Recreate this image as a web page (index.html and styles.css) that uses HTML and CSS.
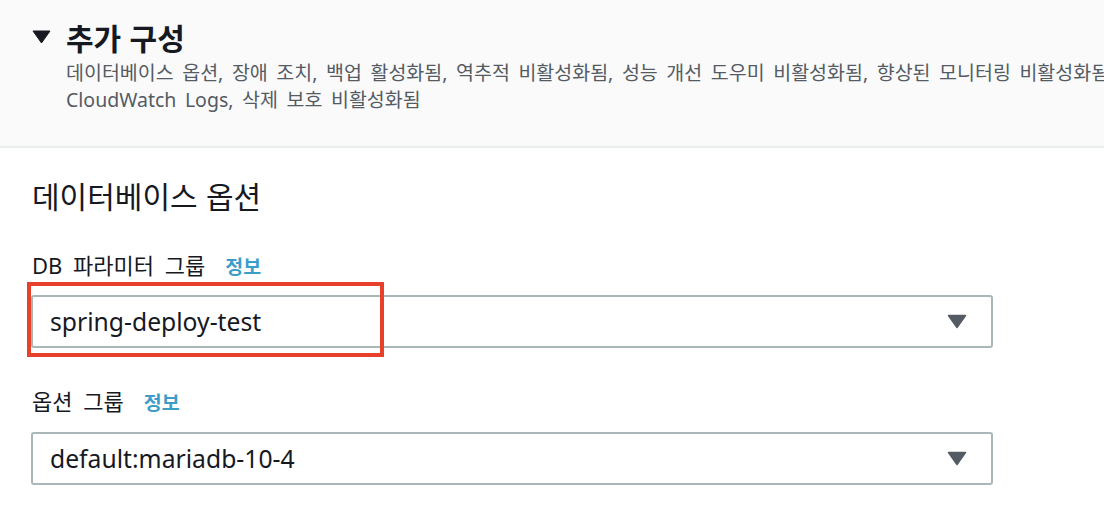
FILE: index.html
```html
<!DOCTYPE html>
<html lang="ko">
<head>
<meta charset="utf-8">
<link rel="stylesheet" href="styles.css">
</head>
<body>
<section class="expander">
  <div class="exp-head">
    <svg class="caret" width="19" height="14" viewBox="0 0 19 14"><path d="M1 1 H18 L9.5 13 Z" fill="#16191f" stroke="#16191f" stroke-width="1" stroke-linejoin="round"/></svg>
    <h2 class="exp-title">추가 구성</h2>
  </div>
  <p class="exp-desc">
    <span class="line">데이터베이스 옵션, 장애 조치, 백업 활성화됨, 역추적 비활성화됨, 성능 개선 도우미 비활성화됨, 향상된 모니터링 비활성화됨,</span>
    <span class="line">CloudWatch Logs, 삭제 보호 비활성화됨</span>
  </p>
</section>
<section class="content">
  <h3 class="section-title">데이터베이스 옵션</h3>
  <div class="field">
    <div class="label">DB 파라미터 그룹<a class="info">정보</a></div>
    <div class="select-wrap">
      <div class="select"><span class="value">spring-deploy-test</span>
        <svg class="arrow" width="20" height="15" viewBox="0 0 20 15"><path d="M1.5 1.5 H18.5 L10 13.5 Z" fill="#545b64" stroke="#545b64" stroke-width="1.5" stroke-linejoin="round"/></svg>
      </div>
      <div class="highlight"></div>
    </div>
  </div>
  <div class="field second">
    <div class="label">옵션 그룹<a class="info">정보</a></div>
    <div class="select-wrap">
      <div class="select"><span class="value">default:mariadb-10-4</span>
        <svg class="arrow" width="20" height="15" viewBox="0 0 20 15"><path d="M1.5 1.5 H18.5 L10 13.5 Z" fill="#545b64" stroke="#545b64" stroke-width="1.5" stroke-linejoin="round"/></svg>
      </div>
    </div>
  </div>
</section>
</body>
</html>
```
FILE: styles.css
```css
html, body {
  margin: 0;
  padding: 0;
  background: #ffffff;
  overflow: hidden;
}
body {
  width: 1104px;
  height: 522px;
  font-family: "Noto Sans", "Noto Sans CJK KR", sans-serif;
  color: #16191f;
}
.expander {
  background: #fafafa;
  border-bottom: 2px solid #eaeded;
  height: 148px;
  box-sizing: border-box;
  padding: 19px 0 0 32px;
}
.exp-head {
  display: flex;
  align-items: center;
  gap: 15px;
  height: 36px;
}
.caret {
  display: block;
  flex: none;
}
.exp-title {
  margin: 0;
  font-size: 30px;
  font-weight: 700;
  line-height: 36px;
  font-family: "Noto Sans CJK KR", sans-serif;
}
.exp-desc {
  margin: 4px 0 0 34px;
  font-size: 19.5px;
  word-spacing: 3.5px;
  line-height: 27px;
  color: #545b64;
}
.exp-desc .line {
  display: block;
  white-space: nowrap;
}
.content {
  padding: 29px 0 0 31px;
}
.section-title {
  margin: 0 0 0 1px;
  font-size: 30px;
  font-weight: 400;
  line-height: 36px;
  font-family: "Noto Sans CJK KR", sans-serif;
}
.field {
  margin-top: 38px;
}
.field.second {
  margin-top: 39px;
}
.label {
  display: flex;
  align-items: baseline;
  font-size: 22px;
  word-spacing: 5px;
  line-height: 28px;
  margin-left: 1px;
  margin-bottom: 14px;
}
.second .label {
  margin-bottom: 15px;
}
.info {
  margin-left: 20px;
  font-size: 19.5px;
  font-weight: 700;
  color: #3d9dc9;
}
.select-wrap {
  position: relative;
  width: 962px;
}
.select {
  height: 53px;
  box-sizing: border-box;
  border: 2px solid #aab7b8;
  border-radius: 3px;
  background: #ffffff;
  display: flex;
  align-items: center;
  justify-content: space-between;
  padding: 0 24px 0 17px;
}
.value {
  font-size: 24.7px;
  color: #16191f;
}
.arrow {
  display: block;
}
.highlight {
  position: absolute;
  left: -4px;
  top: -13px;
  width: 357px;
  height: 75px;
  box-sizing: border-box;
  border: 4px solid #e8402a;
}
```
